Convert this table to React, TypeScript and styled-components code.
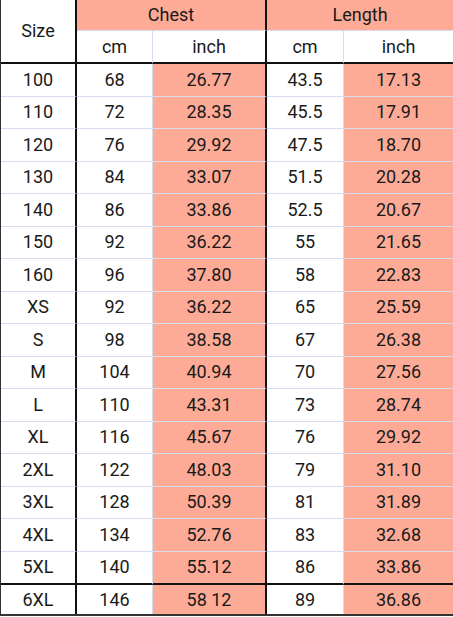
import React from 'react';
import styled, { createGlobalStyle } from 'styled-components';

const GlobalStyle = createGlobalStyle`
    html, body {
        margin: 0;
        padding: 0;
        background: #fff;
    }
`;

const PINK = '#fdab97';
const LINE = '#d8dbee';
const DARK = '#111';

type Edge = 'thick' | 'thin' | 'none';

const Table = styled.table`
    border-collapse: separate;
    border-spacing: 0;
    table-layout: fixed;
    width: 453px;
    font-family: Roboto, 'Liberation Sans', sans-serif;
    font-size: 18px;
    color: #1a1a1a;
    border-left: 1px solid #333;
    border-bottom: 2px solid #333;
`;

const Col = styled.col<{ $w?: number }>`
    width: ${(p) => (p.$w ? `${p.$w}px` : 'auto')};
`;

const edge = (e: Edge | undefined, fallback: Edge) => {
    const v = e ?? fallback;
    if (v === 'thick') return `2px solid ${DARK}`;
    if (v === 'thin') return `1px solid ${LINE}`;
    return 'none';
};

const Cell = styled.td<{ $pink?: boolean; $right?: Edge; $bottom?: Edge; $h?: number }>`
    padding: 0;
    text-align: center;
    vertical-align: middle;
    box-sizing: border-box;
    height: ${(p) => p.$h ?? 32.5}px;
    line-height: 1;
    font-weight: 400;
    background: ${(p) => (p.$pink ? PINK : '#fff')};
    border-right: ${(p) => edge(p.$right, 'none')};
    border-bottom: ${(p) => edge(p.$bottom, 'thin')};
`;

const HeadCell = styled(Cell).attrs({ as: 'th' })``;

const rows: [string, string, string, string, string][] = [
    ['100', '68', '26.77', '43.5', '17.13'],
    ['110', '72', '28.35', '45.5', '17.91'],
    ['120', '76', '29.92', '47.5', '18.70'],
    ['130', '84', '33.07', '51.5', '20.28'],
    ['140', '86', '33.86', '52.5', '20.67'],
    ['150', '92', '36.22', '55', '21.65'],
    ['160', '96', '37.80', '58', '22.83'],
    ['XS', '92', '36.22', '65', '25.59'],
    ['S', '98', '38.58', '67', '26.38'],
    ['M', '104', '40.94', '70', '27.56'],
    ['L', '110', '43.31', '73', '28.74'],
    ['XL', '116', '45.67', '76', '29.92'],
    ['2XL', '122', '48.03', '79', '31.10'],
    ['3XL', '128', '50.39', '81', '31.89'],
    ['4XL', '134', '52.76', '83', '32.68'],
    ['5XL', '140', '55.12', '86', '33.86'],
    ['6XL', '146', '58 12', '89', '36.86'],
];

// column look: right border + pink fill
const cols: { right: Edge; pink: boolean }[] = [
    { right: 'thick', pink: false },
    { right: 'thin', pink: false },
    { right: 'thick', pink: true },
    { right: 'thin', pink: false },
    { right: 'none', pink: true },
];

const App: React.FC = () => {
    return (
        <>
            <GlobalStyle />
            <Table>
                <colgroup>
                    <Col $w={76} />
                    <Col $w={76} />
                    <Col $w={114} />
                    <Col $w={77} />
                    <Col />
                </colgroup>
                <thead>
                    <tr>
                        <HeadCell rowSpan={2} $right="thick" $bottom="thick">
                            Size
                        </HeadCell>
                        <HeadCell colSpan={2} $pink $right="thick" $h={31}>
                            Chest
                        </HeadCell>
                        <HeadCell colSpan={2} $pink $h={31}>
                            Length
                        </HeadCell>
                    </tr>
                    <tr>
                        <HeadCell $right="thin" $bottom="thick" $h={33}>cm</HeadCell>
                        <HeadCell $right="thick" $bottom="thick" $h={33}>inch</HeadCell>
                        <HeadCell $right="thin" $bottom="thick" $h={33}>cm</HeadCell>
                        <HeadCell $bottom="thick" $h={33}>inch</HeadCell>
                    </tr>
                </thead>
                <tbody>
                    {rows.map((r, i) => {
                        const beforeLast = i === rows.length - 2;
                        const last = i === rows.length - 1;
                        const h = last ? 29 : beforeLast ? 33.5 : 32.5;
                        const bottom: Edge = last ? 'none' : beforeLast ? 'thick' : 'thin';
                        return (
                            <tr key={r[0]}>
                                {r.map((v, j) => (
                                    <Cell key={j} $pink={cols[j].pink} $right={cols[j].right} $bottom={bottom} $h={h}>
                                        {v}
                                    </Cell>
                                ))}
                            </tr>
                        );
                    })}
                </tbody>
            </Table>
        </>
    );
};

export default App;
